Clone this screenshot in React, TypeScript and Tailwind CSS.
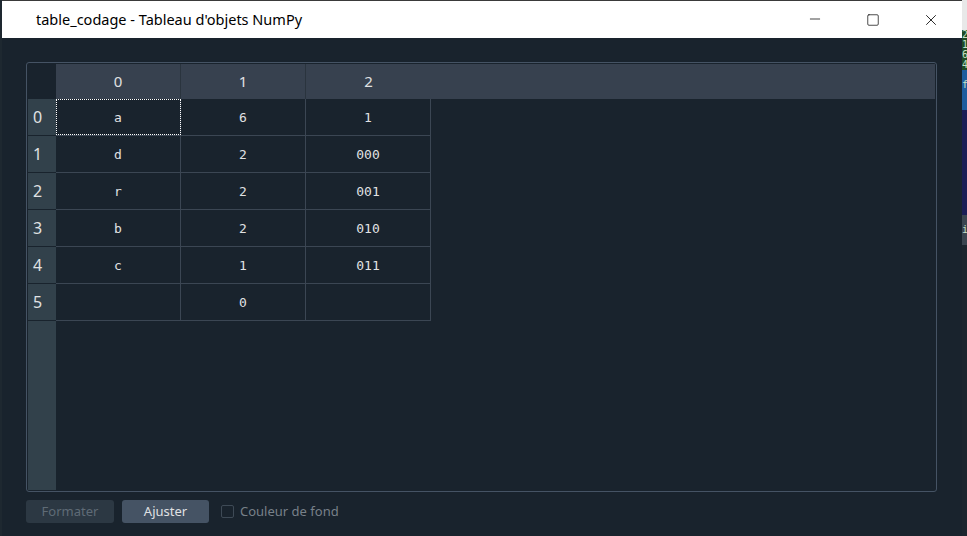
import { Minus, Square, X } from "lucide-react";

const rows = [
  ["a", "6", "1"],
  ["d", "2", "000"],
  ["r", "2", "001"],
  ["b", "2", "010"],
  ["c", "1", "011"],
  ["", "0", ""],
];

const uiFont = { fontFamily: '"Segoe UI", "Noto Sans", "Open Sans", sans-serif' };
const monoFont = { fontFamily: '"DejaVu Sans Mono", "Liberation Mono", monospace' };

const App = () => {
  return (
    <div className="w-[967px] h-[536px] flex bg-[#19232d] overflow-hidden" style={uiFont}>
      <div className="w-[2px] bg-[#1e2830]" />

      <div className="w-[960px] flex flex-col">
        {/* title bar */}
        <div className="h-[38px] bg-white border-t border-[#3a3a3a] flex items-center">
          <span className="pl-[34px] text-[14.5px] text-black flex-1">table_codage - Tableau d'objets NumPy</span>
          <div className="flex items-center h-full text-black">
            <div className="w-[58px] h-full flex items-center justify-center pb-[2px]">
              <Minus size={16} strokeWidth={1.1} />
            </div>
            <div className="w-[58px] h-full flex items-center justify-center">
              <Square size={14} strokeWidth={1.2} />
            </div>
            <div className="w-[58px] h-full flex items-center justify-center mr-[2px]">
              <X size={18} strokeWidth={1.1} />
            </div>
          </div>
        </div>

        {/* body */}
        <div className="flex-1 flex flex-col pl-[24px] pr-[25px] pt-[24px]">
          <div className="h-[430px] border border-[#455364] rounded-[3px] p-[1px] flex flex-col">
            {/* header row */}
            <div className="h-[35px] flex">
              <div className="w-[28px] bg-[#19232d]" />
              <div className="flex-1 flex bg-[#37414f] text-[#e0e1e3] text-[15px]">
                {["0", "1", "2"].map((h, i) => (
                  <div
                    key={h}
                    className={`w-[125px] flex items-center justify-center ${i < 2 ? "border-r border-[#2a343e]" : ""}`}
                  >
                    {h}
                  </div>
                ))}
              </div>
            </div>

            <div className="flex-1 flex">
              {/* row headers */}
              <div className="w-[28px] bg-[#32414b] flex flex-col text-[#e0e1e3] text-[16px]">
                {rows.map((_, i) => (
                  <div key={i} className="h-[37px] flex items-center pl-[5px] border-b border-[#19232d]">
                    {i}
                  </div>
                ))}
              </div>

              {/* data */}
              <div className="flex flex-col self-start" style={monoFont}>
                {rows.map((r, i) => (
                  <div key={i} className="h-[37px] flex text-[13px] text-[#e0e1e3] border-b border-[#3b4653]">
                    {r.map((c, j) => (
                      <div
                        key={j}
                        className={`w-[125px] flex items-center justify-center pt-[1px] border-r border-[#3b4653] ${
                          i === 0 && j === 0 ? "outline outline-1 outline-dotted outline-white -outline-offset-1" : ""
                        }`}
                      >
                        {c}
                      </div>
                    ))}
                  </div>
                ))}
              </div>
            </div>
          </div>

          {/* footer */}
          <div className="flex items-center mt-[8px] gap-[8px] text-[13px]">
            <button className="w-[88px] h-[23px] rounded-[3px] bg-[#2c3843] text-[#5f6b76]">Formater</button>
            <button className="w-[87px] h-[23px] rounded-[3px] bg-[#455364] text-[#e0e1e3]">Ajuster</button>
            <div className="flex items-center ml-[4px]">
              <div className="w-[13px] h-[13px] border border-[#3e4a56] rounded-[2px]" />
              <span className="ml-[6px] text-[#788089]">Couleur de fond</span>
            </div>
          </div>
        </div>
      </div>

      {/* background window edge */}
      <div className="w-[5px] flex flex-col text-[10px] leading-[10px] text-[#c8e0c8] overflow-hidden" style={monoFont}>
        <div className="h-[30px] bg-[#e8e8e8]" />
        <div className="h-[40px] bg-[#1e4b25]">2<br />1<br />6<br />4</div>
        <div className="h-[40px] bg-[#1f5c9e] pt-[10px]">f</div>
        <div className="h-[105px] bg-[#1b1d55]" />
        <div className="h-[30px] bg-[#3b4550] pt-[10px]">i</div>
        <div className="flex-1 bg-[#1c252e]" />
      </div>
    </div>
  );
};

export default App;
